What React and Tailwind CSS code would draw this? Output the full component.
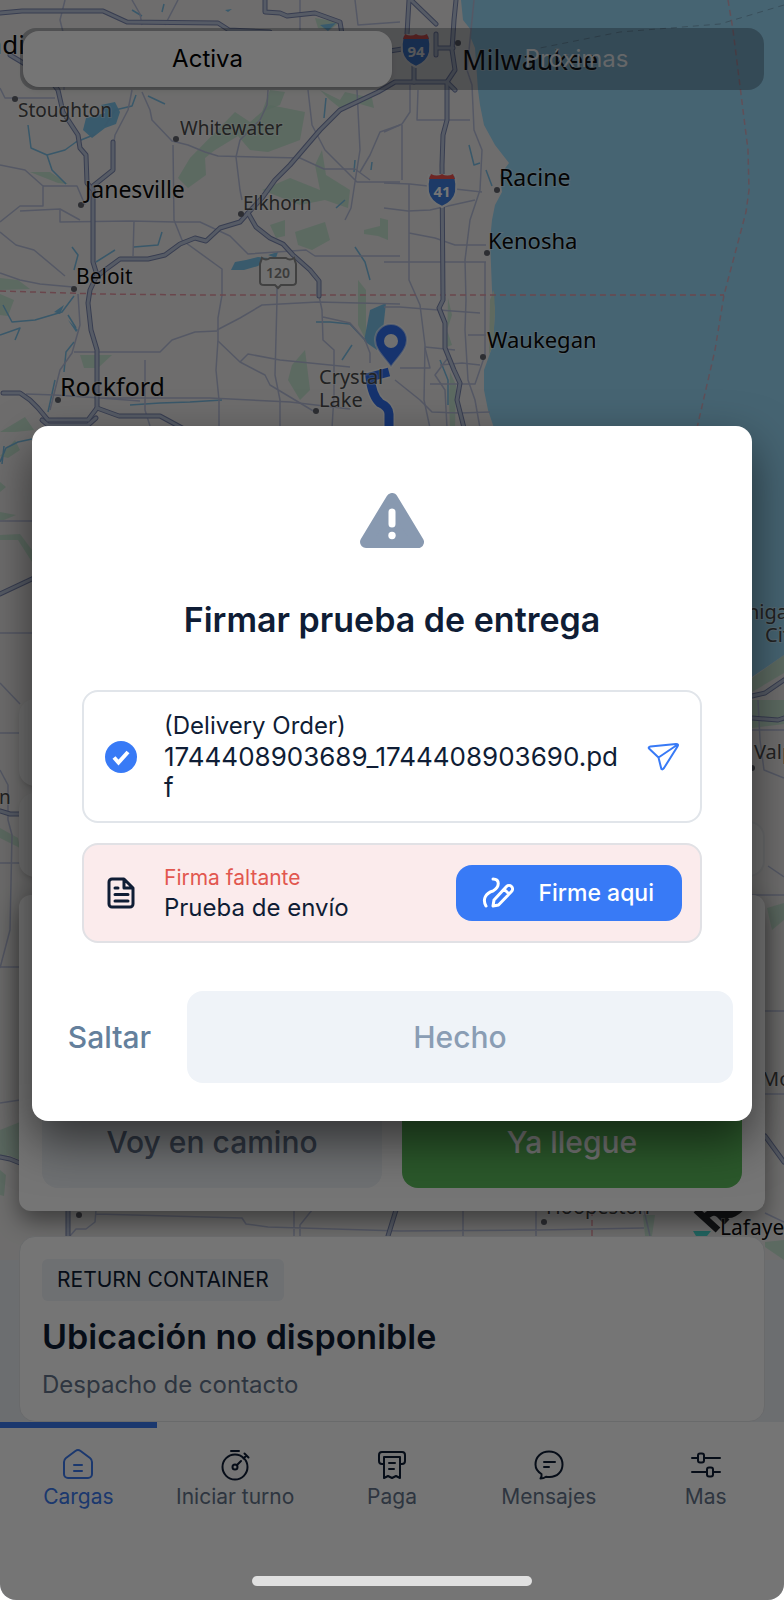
const LABELS = [
  { text: "Madison", x: -36, y: 54, size: 26, major: true },
  { text: "Stoughton", x: 18, y: 117, size: 19 },
  { text: "Whitewater", x: 180, y: 135, size: 19 },
  { text: "Janesville", x: 85, y: 198, size: 23, major: true },
  { text: "Elkhorn", x: 243, y: 210, size: 19 },
  { text: "Milwaukee", x: 462, y: 70, size: 27, major: true },
  { text: "Racine", x: 499, y: 186, size: 23, major: true },
  { text: "Kenosha", x: 488, y: 249, size: 22, major: true },
  { text: "Waukegan", x: 487, y: 348, size: 22, major: true },
  { text: "Beloit", x: 76, y: 284, size: 21, major: true },
  { text: "Rockford", x: 60, y: 396, size: 25, major: true },
  { text: "Crystal", x: 319, y: 384, size: 20 },
  { text: "Lake", x: 319, y: 407, size: 20 },
  { text: "Michigan", x: 714, y: 619, size: 20 },
  { text: "City", x: 765, y: 642, size: 20 },
  { text: "Valparaiso", x: 754, y: 759, size: 20 },
  { text: "Monticello", x: 761, y: 1086, size: 20 },
  { text: "Dixon", x: -41, y: 804, size: 19 },
  { text: "Hoopeston", x: 546, y: 1214, size: 20 },
  { text: "Lafayette", x: 720, y: 1235, size: 21, major: true },
];

const DOTS = [
  [15, 99], [176, 139], [81, 205], [241, 214], [458, 43], [497, 190],
  [487, 253], [483, 357], [74, 289], [58, 400], [316, 411], [752, 768],
  [79, 1215], [544, 1222],
];

const HIGHWAYS = [
  "M0 13 22 11H103L127 22 218 23 229 30 270 32",
  "M265 0V12L280 13 287 16 315 13 340 22 342 34",
  "M10 55 35 70 50 80 58 90 63 112 78 135 80 148 86 155 87 183 93 190V262L97 275 90 290 88 303 91 330 97 350V408L88 420H48L38 408 30 400 20 393H3",
  "M97 408 119 416H160L184 429",
  "M113 142V170L93 186",
  "M456 0 454 20 452 50 455 70 447 82H395L378 92 340 110 320 130 290 165 275 180 262 198 248 213 240 222 220 228 206 241 195 238 180 244 165 255 148 259H120L105 270 95 278",
  "M248 213 256 227 270 238 283 244 293 255 310 270 319 281V296",
  "M409 0 407 34M414 60V82M384 52 402 49M436 48H453M436 34V55M411 0 436 24M447 82 455 90",
  "M447 82V120L443 135 442 165 443 300 439 308 445 323V348L454 370 460 383 457 400 464 428",
  "M42 420 48 425H88L96 418",
  "M0 594 34 578",
  "M0 811 10 814H20M0 1157 10 1159 20 1163",
  "M752 696 765 693 784 680M752 718 778 720 784 718M765 1136 784 1162",
  "M68 1210V1236M396 1210 388 1236",
];

const ROADS = [
  "M65 0 60 20 65 40 64 90M132 0 140 14 142 25M178 0 165 25M300 0V30M355 0 358 25 400 22",
  "M0 88 5 98H55M132 90 128 110 115 135 114 142M142 92 150 110 152 120 172 141 188 145 205 152 218 156 300 158 324 169H355L370 180",
  "M173 145 174 220 182 240 222 269V295L218 318V340L216 370 219 400V428",
  "M0 165 25 170 43 186V206H20L0 222M20 211 60 209 80 220",
  "M43 186H77L85 205M60 210V222L130 221 175 222 200 222 230 236 248 254 306 250 315 256H400",
  "M268 90 267 105 260 120 240 140 236 157 240 190 242 200",
  "M308 90 312 125 325 150 357 182H400M357 90 360 150 355 182 351 208 345 220M400 125 380 132 370 155 360 172",
  "M134 221 133 256M0 232 16 245 34 250 65 276M0 273 20 280 40 284 73 287M78 294 80 325 72 353 60 370 50 410",
  "M74 352H160L172 340 195 332 217 331M217 330 240 318 262 305 318 302 400 304",
  "M277 280V300L275 375 280 400V428M218 341 240 362 265 375 270 385 315 412M240 362 248 354 280 360 350 367",
  "M319 296 322 310 323 340 334 350V395L332 428M323 317 350 323 365 340 370 353V363",
  "M145 360V410L150 426M26 394 55 395 100 398H210L290 402 350 409M100 398 140 401",
  "M384 132 402 124 410 112 410 85M402 125V180M384 183 410 184 482 192M384 208 408 211 430 210 475 200",
  "M409 184V280L420 305 425 345 424 400 430 428M384 262H486M409 233 435 238 455 245H486",
  "M474 0 467 70 472 85 474 130 482 150 480 190 470 220 465 260 466 300 465 330 468 380 475 400 480 428",
  "M418 90 417 120H470M384 307H400L425 309 480 313M425 347 455 350M440 365 462 363 480 365M400 368 430 368 425 348M430 384H475L485 355V262",
  "M395 380 420 400 432 412 460 413 490 412M450 355 435 375 445 390 447 428M468 335H486",
  "M0 521H32M0 633H32M0 683 20 704M0 733H20M0 770 8 785 8 820 12 835 10 930 0 968M0 863H20M0 967H20M0 1103 20 1100",
  "M752 730H784M758 700 760 740 764 770 784 778M768 866 784 877M752 895H784M765 1011H784M765 1094H784",
  "M96 1210 95 1222 86 1229H76L70 1236M96 1214 242 1218 246 1224 268 1227 400 1231M294 1210V1236M312 1210 300 1225V1236",
  "M463 1210V1236M536 1210V1236M400 1231 540 1230 644 1228M644 1210 650 1236M765 1213 784 1222",
];

const CREEKS = [
  "M164 4 162 12M132 10 142 16M28 125 31 148 47 155 65 150 76 142 96 134M47 155 52 170 66 184M105 126 115 110 132 106 136 95",
  "M148 96 165 104M326 98 324 118M355 160 354 172M372 162 371 170M345 200 336 208M72 247 78 255 74 270M96 262 115 250M134 247 158 245 162 232",
  "M3 305 12 322 35 320 62 312 74 296M0 335 20 328 15 340M68 315 76 328M74 342 66 352 64 372M55 380 48 412M130 405 160 403 190 402 222 400M352 345 342 360M316 322 330 322 350 324 365 340",
  "M469 145 474 165 480 163M486 170 492 186M440 360 448 380 448 405M355 247 365 262 370 280M0 462 6 448 18 442 32 439M2 464 4 446",
];

const GREENS = [
  "M235 112 250 122 270 105 305 112 300 140 268 152 250 150 238 136 215 150 205 158 206 175 188 188 178 178 190 158Z",
  "M270 90 262 112 280 105 285 92ZM320 90 340 100 345 92 372 98 374 108 360 104 340 108 330 100Z",
  "M262 190 290 178 320 190 315 165 322 150 326 175 350 190 348 208 325 200 300 205Z",
  "M295 232 325 222 330 240 312 250 298 245ZM270 225 285 220 285 236 276 238ZM364 230 380 226V218L388 220V240L378 236 364 234Z",
  "M0 278 18 280 30 289 0 290ZM0 294 14 300 8 316 0 315ZM80 355H112L98 368H84ZM292 365 305 350 310 390 300 400 288 380ZM358 280 366 290 366 340 358 325Z",
  "M0 432 25 417 34 430 15 432ZM0 456 15 440 20 450 8 458ZM0 482 6 487 0 492ZM0 512 16 515 4 520 0 520ZM0 535 20 534 32 550V562L18 540 0 540Z",
  "M448 298 452 315 447 330 452 345 447 347ZM492 300 494 320 490 325ZM450 372 456 385 455 428H450L449 400Z",
  "M752 678 784 655V673L752 692ZM752 700H784V724L752 728ZM767 908 784 903V920L772 930Z",
  "M0 828 18 838 20 848 0 838ZM0 1130 20 1122V1160L8 1155 0 1160ZM0 1170 6 1175 4 1196 0 1195ZM643 1215 655 1215 652 1236H645Z",
  "M765 1242 784 1240V1260L765 1247ZM30 172 50 172 68 184 58 183ZM315 18 340 22 330 30 318 28Z",
];

function Interstate({ x, y, label }) {
  return (
    <g transform={`translate(${x} ${y})`}>
      <path d="M-13-15H13Q15-6 14 2 12 12 0 17-12 12-14 2-15-6-13-15Z" fill="#3f7fe0" stroke="#f4f4f4" strokeWidth="2" />
      <path d="M-11-16q6 3 11 0 5 3 11 0l2 5h-26Z" fill="#ef5350" />
      <text y="7" textAnchor="middle" fontSize="15" fontWeight="700" fill="#ffffff">{label}</text>
    </g>
  );
}

function RouteMap() {
  return (
    <svg
      viewBox="0 0 784 1260"
      preserveAspectRatio="xMidYMin slice"
      className="absolute inset-x-0 top-0 h-[1260px] w-full font-['Noto_Sans',sans-serif]"
      aria-label="Mapa de ruta"
      role="img"
    >
      <rect width="784" height="1260" fill="#efeeed" />
      {GREENS.map((d) => <path key={d} d={d} fill="#bfe3cd" opacity="0.8" />)}
      <path
        d="M461 0 463 20 471 30 470 36 475 48 478 90 480 105 484 125 495 145 509 163 500 175 502 192 495 205 492 220 490 240 492 290 495 310 493 345 484 370V390L488 410 494 428 520 520 600 650 660 700 752 677 784 655V0Z"
        fill="#99d9f8"
      />
      <path d="M494 290 495 312 493 345 489 355 490 300Z" fill="#cfe6cf" />
      <g fill="#7cc4ec">
        <path d="M83 130 86 118 105 113 101 105 115 102 120 112 116 124 105 128 92 138Z" />
        <path d="M231 270 235 262 246 260 258 257 268 258 258 266 244 270Z" />
        <path d="M370 310 386 303 383 330 377 350 364 341Z" />
        <path d="M320 25 336 23 328 31ZM225 10 232 9 228 12ZM268 255 278 252 276 258ZM54 312 64 305 60 314ZM68 320 78 330 76 332Z" />
      </g>
      <g fill="none" stroke="#7cbfe6" strokeWidth="1.5" strokeLinejoin="round">
        {CREEKS.map((d) => <path key={d} d={d} />)}
      </g>
      <g fill="none" stroke="#b9c0dc" strokeWidth="1.5" strokeLinejoin="round">
        {ROADS.map((d) => <path key={d} d={d} />)}
      </g>
      <g fill="none" stroke="#e79aa6" strokeWidth="1.5" strokeDasharray="6 4">
        <path d="M0 291 100 294 200 295H724" />
        <path d="M728 0 733 30 748 150 749 190 746 212 724 295 715 350 697 428" opacity="0.7" />
        <path d="M592 1210V1236" />
      </g>
      <path d="M784 5 720 24 620 32 540 48" fill="none" stroke="#7cacc6" strokeDasharray="6 5" />
      <g fill="none" strokeLinejoin="round" strokeLinecap="round">
        {HIGHWAYS.map((d) => <path key={d} d={d} stroke="#7a86b0" strokeWidth="5" />)}
        {HIGHWAYS.map((d) => <path key={d} d={d} stroke="#bcc6dc" strokeWidth="3" />)}
      </g>
      <g>
        <path d="M262 258q4 3 8 0h16q4 3 8 0l2 6v18q0 3-4 3h-11l-3 3-3-3h-11q-4 0-4-3v-18Z" fill="#f4f4f4" stroke="#8f8f8f" strokeWidth="2" />
        <text x="278" y="278" textAnchor="middle" fontSize="14" fontWeight="600" fill="#808080">120</text>
      </g>
      <Interstate x={416} y={50} label="94" />
      <Interstate x={442} y={190} label="41" />
      <path d="M389 372 370 377Q372 396 380 403 389 407 389 414V440" fill="none" stroke="#ffffff" strokeWidth="12" opacity="0.6" />
      <path d="M389 372 370 377Q372 396 380 403 389 407 389 414V440" fill="none" stroke="#3170f0" strokeWidth="9" />
      <path
        d="M391 367C385 358 375 350 375 340A16 16 0 0 1 407 340C407 350 397 358 391 367Z"
        fill="#3170f0" stroke="#ffffff" strokeOpacity="0.6" strokeWidth="2"
      />
      <circle cx="391" cy="341" r="7" fill="#f4f4f4" />
      <g fill="none" stroke="#26282c" strokeWidth="7">
        <path d="M696 1210 718 1230M704 1218q10-10 16-3l7 7M722 1206q2 12 12 7t6-10" />
      </g>
      <path d="M693 1231h18l-4 5h-11Z" fill="#48dad0" />
      {DOTS.map(([x, y]) => <circle key={`${x}-${y}`} cx={x} cy={y} r="3" fill="#62646e" />)}
      {LABELS.map((l) => (
        <text
          key={l.text} x={l.x} y={l.y} fontSize={l.size}
          fill={l.major ? "#0a0a0a" : "#4a4a4a"}
          stroke="#ffffff" strokeOpacity="0.35" strokeWidth="2" paintOrder="stroke"
        >
          {l.text}
        </text>
      ))}
    </svg>
  );
}

function Icon({ children, className = "size-8", width = 2 }) {
  return (
    <svg
      viewBox="0 0 32 32" className={className} fill="none" stroke="currentColor"
      strokeWidth={width} strokeLinecap="round" strokeLinejoin="round" aria-hidden="true"
    >
      {children}
    </svg>
  );
}

const TABS = [
  {
    label: "Cargas",
    active: true,
    icon: <path d="M2 13a5 5 0 0 1 2-4l9.400-7a4.500 4.500 0 0 1 5.200 0L28 9a5 5 0 0 1 2 4v12a4 4 0 0 1-4 4H6a4 4 0 0 1-4-4ZM12 16h8M12 22h8" />,
  },
  {
    label: "Iniciar turno",
    icon: (
      <>
        <circle cx="16" cy="18" r="12.500" />
        <circle cx="16" cy="18" r="2.500" />
        <path d="M12 2h8M18 16l4-4M24.500 9.500l3-3M25.500 4.500l4 4" />
      </>
    ),
  },
  {
    label: "Paga",
    icon: <path d="M8 15H6a3 3 0 0 1-3-3V6a3 3 0 0 1 3-3h20a3 3 0 0 1 3 3v6a3 3 0 0 1-3 3h-2M8 8h16v21l-4-2-4 2-4-2-4 2ZM13 14h6M13 20h5" />,
  },
  {
    label: "Mensajes",
    icon: <path d="M16 2.500c8 0 13.500 5.500 13.500 13S24 28 16.500 28q-2 0-3.500-.3-2.500 1.800-5.500 1.800 1.500-1.500 1-4.500C5 23 2.500 20 2.500 15.500 2.500 8 8 2.500 16 2.500ZM11 13h11M11 18h5" />,
  },
  {
    label: "Mas",
    icon: (
      <>
        <path d="M2 9h6M14 9h16M2 23h15M23 23h7" />
        <rect x="8" y="4.500" width="6" height="9" rx="2" />
        <rect x="17" y="18.500" width="6" height="9" rx="2" />
      </>
    ),
  },
];

function Segments() {
  return (
    <div className="grid grid-cols-2 rounded-2xl bg-[#1c2030]/30 p-[3px] text-[24px] leading-8" role="tablist">
      <button type="button" role="tab" aria-selected="true" className="rounded-2xl bg-white py-3 text-black shadow-md">
        Activa
      </button>
      <button type="button" role="tab" aria-selected="false" className="py-3 text-[#dde0e4]">
        Próximas
      </button>
    </div>
  );
}

function LoadCards() {
  return (
    <div className="flex flex-col px-[19px]">
      <div className="h-[87px] w-1/2 rounded-2xl bg-[#f4f4f4] shadow-md" />
      <div className="mt-[7px] flex items-end justify-between">
        <div className="h-[84px] w-1/3 rounded-2xl bg-[#f4f4f4] shadow-md" />
        <div className="h-14 w-1/3 rounded-2xl border-2 border-[#e4e6ea] bg-[#f4f4f4]" />
      </div>
      <section className="mt-[18px] flex h-[316px] flex-col justify-end rounded-xl bg-white p-[23px] shadow-[0_10px_24px_rgba(0,0,0,0.45)]">
        <div className="grid grid-cols-2 gap-5 text-[30px] font-medium leading-9">
          <button type="button" className="rounded-2xl bg-[#eff3f8] py-7 text-[#64748b]">Voy en camino</button>
          <button type="button" className="rounded-2xl bg-[#5ec05e] py-7 text-white">Ya llegue</button>
        </div>
      </section>
      <section className="mt-[25px] flex flex-col items-start rounded-2xl border border-[#e4e7ea] bg-white px-[22px] pt-[22px] pb-5">
        <span className="rounded-md bg-[#eff3f8] px-[15px] py-[7px] text-[21px] leading-7 text-[#0f1d35]">RETURN CONTAINER</span>
        <h2 className="mt-[14px] text-[34px] font-semibold leading-11 text-[#0f1d35]">Ubicación no disponible</h2>
        <p className="mt-[10px] text-[24px] leading-8 text-[#64748b]">Despacho de contacto</p>
      </section>
    </div>
  );
}

function TabBar() {
  return (
    <nav className="grid h-[178px] grid-cols-5 bg-white text-[21px] leading-7">
      {TABS.map((tab) => (
        <a
          key={tab.label}
          href="#"
          aria-current={tab.active ? "page" : undefined}
          className={
            tab.active
              ? "flex flex-col items-center border-t-[6px] border-[#3b7af0] pt-[21px] text-[#3b7af0]"
              : "flex flex-col items-center border-t-[6px] border-transparent pt-[21px] text-[#64748b]"
          }
        >
          <span className={tab.active ? "text-[#3b7af0]" : "text-[#0f1d35]"}>
            <Icon>{tab.icon}</Icon>
          </span>
          <span className="mt-[2px] whitespace-nowrap">{tab.label}</span>
        </a>
      ))}
    </nav>
  );
}

function SignDialog() {
  return (
    <section
      role="dialog"
      aria-modal="true"
      aria-labelledby="sign-title"
      className="w-full rounded-2xl bg-white pt-[67px] pb-[38px] text-[#0f1d35] shadow-[0_20px_48px_rgba(0,0,0,0.55)]"
    >
      <svg viewBox="0 0 64 55" className="mx-auto h-[55px] w-16" aria-hidden="true">
        <path d="M32 6 58 49H6Z" fill="#8899b0" stroke="#8899b0" strokeWidth="12" strokeLinejoin="round" />
        <path d="M32 19V31" stroke="#ffffff" strokeWidth="7" strokeLinecap="round" />
        <circle cx="32" cy="42.500" r="3.700" fill="#ffffff" />
      </svg>
      <h1 id="sign-title" className="mt-[50px] text-center text-[34px] font-semibold leading-11">
        Firmar prueba de entrega
      </h1>
      <ul className="mt-12 flex flex-col gap-5 px-[50px]">
        <li className="flex items-center rounded-2xl border-2 border-[#e1e5ea] py-[18px] pl-[21px] pr-[21px]">
          <svg viewBox="0 0 32 32" className="size-8 shrink-0" aria-hidden="true">
            <circle cx="16" cy="16" r="16" fill="#387af6" />
            <path d="M9 16.500 13.500 21.500 23 11" fill="none" stroke="#ffffff" strokeWidth="4" />
          </svg>
          <p className="ml-[27px] min-w-0 flex-1 break-all text-[26px] leading-[31px]">
            <span className="block text-[24px]">(Delivery Order)</span>
            1744408903689_1744408903690.pdf
          </p>
          <button type="button" aria-label="Enviar documento" className="ml-6 text-[#387af6]">
            <Icon>
              <path d="M2 7.500Q1 6 3.500 5.500L29 3Q32 3 30.500 5.500L17 27Q14.500 30 14 26.500L11.500 16.500ZM11.500 16.500 30 4" />
            </Icon>
          </button>
        </li>
        <li className="flex items-center rounded-2xl border-2 border-[#e1e1e5] bg-[#fbebec] py-[18px] pl-[21px] pr-[18px]">
          <Icon className="size-8 shrink-0" width={3}>
            <path d="M19 2H7a3 3 0 0 0-3 3v22a3 3 0 0 0 3 3h18a3 3 0 0 0 3-3V11ZM19 2v9h9ZM10 11h3M10 17.500h13M10 24h13" />
          </Icon>
          <p className="ml-[27px] min-w-0 flex-1 text-[24px] leading-[30px]">
            <span className="block text-[21px] text-[#e2574f]">Firma faltante</span>
            Prueba de envío
          </p>
          <button type="button" className="flex items-center rounded-2xl bg-[#387af6] py-3 pl-[26px] pr-7 text-[23px] font-medium leading-8 text-white">
            <Icon width={3}>
              <path d="M11 2C18 2 18 10 11 14 4 16 0 22 4 29M11 29l1-6L24.500 9.500a3.500 3.500 0 0 1 5 5L16.500 28ZM22 12l5 5" />
            </Icon>
            <span className="ml-6">Firme aqui</span>
          </button>
        </li>
      </ul>
      <div className="mt-12 flex pr-[19px] text-[30px] font-medium leading-9">
        <button type="button" className="w-[155px] py-7 text-[#64809c]">Saltar</button>
        <button type="button" disabled className="flex-1 rounded-2xl bg-[#eff3f8] py-7 text-[#8a9db4]">Hecho</button>
      </div>
    </section>
  );
}

export default function App() {
  return (
    <main className="min-h-screen bg-white font-['Inter',sans-serif]">
      <div className="relative isolate flex min-h-screen flex-col overflow-hidden rounded-b-2xl bg-[#eceff4]">
        <RouteMap />
        <div className="relative flex flex-1 flex-col">
          <header className="px-5 pt-7">
            <Segments />
          </header>
          <div className="mt-auto">
            <LoadCards />
            <TabBar />
          </div>
        </div>
        <div className="absolute inset-0 flex items-center bg-black/[.54] px-8 pb-[53px]">
          <SignDialog />
        </div>
        <div className="absolute bottom-[14px] left-1/2 h-[10px] w-[280px] -translate-x-1/2 rounded-full bg-[#e0e0e0]" />
      </div>
    </main>
  );
}
